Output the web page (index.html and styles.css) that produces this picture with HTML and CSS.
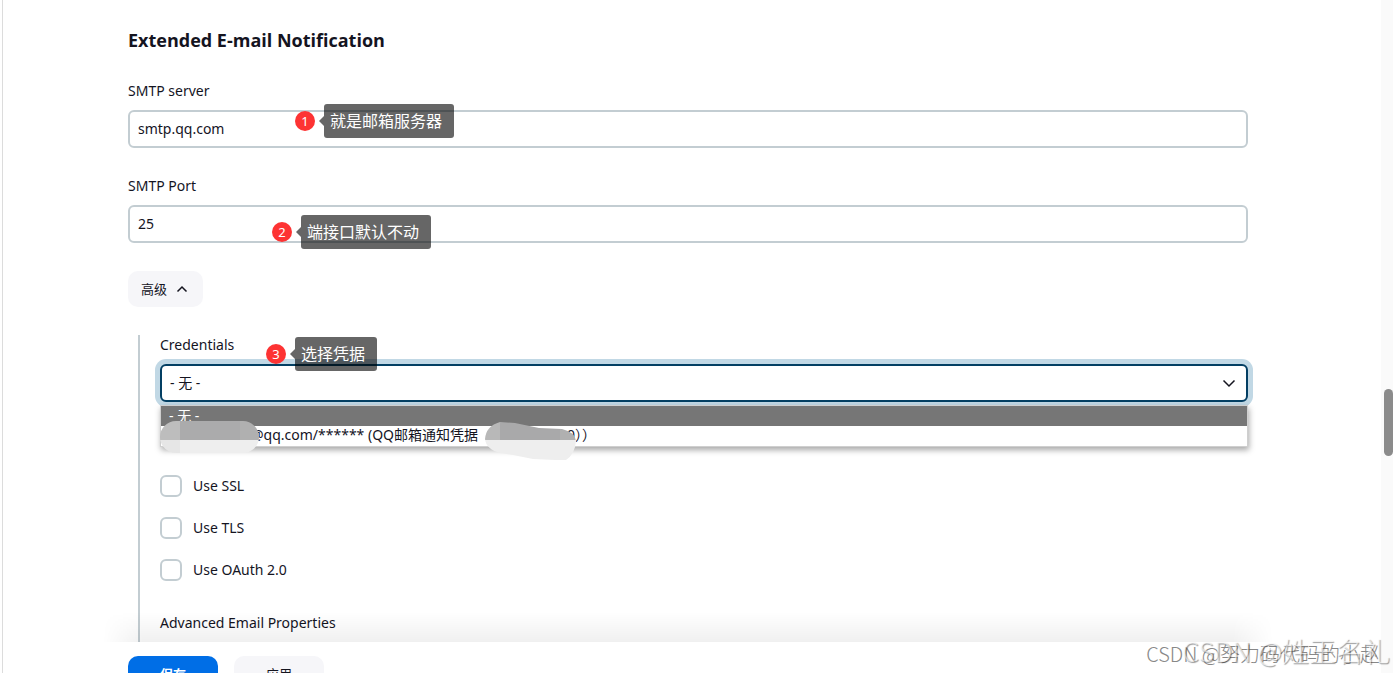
FILE: index.html
```html
<!DOCTYPE html>
<html lang="zh-CN">
<head>
  <meta charset="utf-8">
  <meta name="viewport" content="width=device-width, initial-scale=1.0">
  <title>Extended E-mail Notification</title>
  <link rel="stylesheet" href="styles.css">
</head>
<body>
  <div class="page">
    <form class="config">
      <div class="content">
        <h2>Extended E-mail Notification</h2>

        <div class="field">
          <label for="smtp-server">SMTP server</label>
          <input class="text-input" id="smtp-server" type="text" value="smtp.qq.com">
          <div class="note note-server"><span class="num">1</span><span class="tip">就是邮箱服务器</span></div>
        </div>

        <div class="field">
          <label for="smtp-port">SMTP Port</label>
          <input class="text-input" id="smtp-port" type="text" value="25">
          <div class="note note-port"><span class="num">2</span><span class="tip">端接口默认不动</span></div>
        </div>

        <button class="advanced-btn" type="button">高级
          <svg width="12" height="8" viewBox="0 0 12 8"><path d="M1.500 6.500 6 2l4.500 4.500"/></svg>
        </button>

        <div class="advanced">
          <div class="field credentials">
            <label for="credentials">Credentials</label>
            <div class="select-wrap">
              <select id="credentials">
                <option>- 无 -</option>
              </select>
              <svg class="chevron" width="14" height="9" viewBox="0 0 14 9"><path d="M1.500 1.500 7 7l5.500-5.500"/></svg>
              <ul class="options">
                <li class="active">- 无 -</li>
                <li class="account">@qq.com/****** (QQ邮箱通知凭据（<span class="gap"></span>0））</li>
              </ul>
              <svg class="smudge smudge-user" width="100" height="33" viewBox="0 0 100 33">
                <clipPath id="user-shape"><rect width="99" height="32" rx="16"/></clipPath>
                <g clip-path="url(#user-shape)">
                  <path fill="#bdbdbd" d="M0 0h20v19H0z"/>
                  <path fill="#ababac" d="M20 0h60v19H20z"/>
                  <path fill="#b0b0b0" d="M80 0h20v19H80z"/>
                  <path fill="#e6e6e6" d="M0 19h20v14H0z"/>
                  <path fill="#eeeeee" d="M20 19h80v14H20z"/>
                </g>
              </svg>
              <svg class="smudge smudge-name" width="91" height="38" viewBox="0 0 91 38">
                <clipPath id="name-shape"><path d="M15 0 30 1 54 6 77 7Q90 10 91 19Q90 32 81 38H70L48 37 28 33 15 31Q1 27 0 17Q1 4 15 0Z"/></clipPath>
                <g clip-path="url(#name-shape)">
                  <path fill="#b8b8b8" d="M0 0h15v18H0z"/>
                  <path fill="#a9a9aa" d="M15 0h60v18H15z"/>
                  <path fill="#b0b0b0" d="M75 0h16v18H75z"/>
                  <path fill="#eeeeee" d="M0 18h91v20H0z"/>
                </g>
              </svg>
            </div>
            <div class="note note-credentials"><span class="num">3</span><span class="tip">选择凭据</span></div>
          </div>

          <div class="checks">
            <label><input type="checkbox">Use SSL</label>
            <label><input type="checkbox">Use TLS</label>
            <label><input type="checkbox">Use OAuth 2.0</label>
          </div>

          <p class="properties">Advanced Email Properties</p>
        </div>
      </div>

      <div class="bottom-bar">
        <button class="btn primary" type="submit">保存</button>
        <button class="btn" type="button">应用</button>
      </div>
    </form>

    <div class="scrollbar"><div class="thumb"></div></div>
  </div>

  <div class="watermark small">CSDN @努力码代码的小赵</div>
  <div class="watermark large">CSDN @姓王名礼</div>
</body>
</html>
```
FILE: styles.css
```css
* {
  box-sizing: border-box;
}

body {
  margin: 0;
  height: 100vh;
  overflow: hidden;
  position: relative;
  background: #fff;
  color: #14141f;
  font-family: "Noto Sans", "Noto Sans CJK SC", sans-serif;
  font-size: 14px;
  line-height: 20px;
}

button, input, select {
  font: inherit;
  color: inherit;
}

svg {
  fill: none;
  stroke: #14141f;
  stroke-width: 1.5;
}

.page {
  display: flex;
  height: 100%;
  margin-left: 2px;
  border-left: 1px solid #dcdcdc;
}

.config {
  flex: 1;
  min-width: 0;
  display: flex;
  flex-direction: column;
}

.content {
  flex: 1;
  min-height: 0;
  overflow: hidden;
  padding: 26px 133px 0 125px;
}

h2 {
  margin: 0 0 27px;
  font-family: "Open Sans", sans-serif;
  font-size: 18px;
  line-height: 28px;
  font-weight: 700;
}

.field {
  position: relative;
  margin-bottom: 28px;
}

.field > label {
  display: block;
  margin-bottom: 9px;
}

.text-input, select {
  display: block;
  width: 100%;
  height: 38px;
  padding: 0 8px 2px;
  border: 2px solid #c3cdd2;
  border-radius: 6px;
  background: #fff;
}

/* numbered notes over the fields */
.note {
  position: absolute;
  z-index: 3;
  display: flex;
  align-items: center;
  gap: 9px;
}

.note-server {
  left: 167px;
  top: 23px;
}

.note-port {
  left: 144px;
  top: 39px;
}

.note-credentials {
  left: 106px;
  top: 2px;
}

.num {
  width: 20px;
  height: 20px;
  border-radius: 50%;
  background: #fd3333;
  color: #fff;
  font-size: 13px;
  text-align: center;
}

.tip {
  position: relative;
  height: 34px;
  padding: 0 12px 0 6px;
  border-radius: 3px;
  background: rgba(0, 0, 0, 0.6);
  color: #fff;
  font-size: 16px;
  line-height: 34px;
  white-space: nowrap;
}

.tip::before {
  content: "";
  position: absolute;
  left: -5px;
  top: 12px;
  border: 5px solid transparent;
  border-left: 0;
  border-right-color: rgba(0, 0, 0, 0.6);
}

.advanced-btn {
  display: flex;
  align-items: center;
  gap: 9px;
  height: 36px;
  padding: 0 15px 0 13px;
  border: 0;
  border-radius: 10px;
  background: #f6f6f9;
  font-size: 13px;
}

.advanced {
  margin: 28px 0 0 10px;
  padding-left: 20px;
  border-left: 2px solid #c3cdd2;
  height: 400px;
}

.credentials {
  margin-bottom: 73px;
}

.select-wrap {
  position: relative;
}

select {
  appearance: none;
  padding-bottom: 0;
  border-color: #033f63;
  box-shadow: 0 0 0 5px #c1d8e5;
}

.chevron {
  position: absolute;
  right: 12px;
  top: 15px;
}

.options {
  position: absolute;
  z-index: 1;
  top: 41px;
  left: 0;
  right: 0;
  margin: 0;
  padding: 0;
  list-style: none;
  border: 1px solid #cfcfcf;
  background: #fff;
  box-shadow: 1px 3px 6px rgba(0, 0, 0, 0.35);
}

.options li {
  height: 20px;
  padding-left: 8px;
  overflow: hidden;
  line-height: 18px;
  white-space: nowrap;
}

.options .active {
  background: #767676;
  color: #fff;
  line-height: 20px;
}

.options .account {
  padding-left: 90px;
}

.gap {
  display: inline-block;
  width: 75px;
}

.smudge {
  position: absolute;
  z-index: 2;
  stroke: none;
}

.smudge-user {
  left: 0;
  top: 57px;
}

.smudge-name {
  left: 325px;
  top: 58px;
}

.checks {
  display: flex;
  flex-direction: column;
  align-items: flex-start;
  gap: 20px;
}

.checks label {
  display: flex;
  align-items: center;
  gap: 11px;
}

.checks input {
  appearance: none;
  width: 22px;
  height: 22px;
  margin: 0;
  border: 2px solid #c3cdd2;
  border-radius: 6px;
  background: #fff;
}

.properties {
  margin: 32px 0 0;
}

.bottom-bar {
  position: relative;
  flex: 0 0 31px;
  min-height: 0;
  height: 31px;
  display: flex;
  align-items: flex-start;
  gap: 16px;
  padding: 14px 133px 0 125px;
}

/* soft shade above the bar */
.bottom-bar::before {
  content: "";
  position: absolute;
  left: 100px;
  right: 108px;
  bottom: 100%;
  height: 30px;
  background: linear-gradient(to top, rgba(0, 0, 0, 0.06), transparent);
  mask-image: linear-gradient(to right, transparent, #000 40px, #000 calc(100% - 40px), transparent);
}

.btn {
  flex: none;
  width: 90px;
  height: 36px;
  padding: 0;
  border: 0;
  border-radius: 10px;
  background: #f6f6f9;
  font-size: 13px;
}

.primary {
  background: #006ee6;
  color: #fff;
  font-weight: 700;
}

.scrollbar {
  flex: 0 0 12px;
  display: grid;
  grid-template-rows: 389fr 67fr 217fr;
  padding-left: 3px;
  background: #fafafa;
}

.thumb {
  grid-row: 2;
  border-radius: 5px;
  background: #8b8b8b;
}

.watermark {
  position: absolute;
  z-index: 4;
  white-space: nowrap;
  font-family: "Noto Sans CJK SC", sans-serif;
  font-weight: 300;
}

.large {
  right: 3px;
  bottom: 6px;
  color: rgba(255, 255, 255, 0.6);
  font-size: 27px;
  line-height: 32px;
  text-shadow: 1px 1px 1px rgba(0, 0, 0, 0.4);
}

.small {
  right: 13px;
  bottom: 7px;
  color: #888;
  font-size: 20px;
  line-height: 24px;
}
```
